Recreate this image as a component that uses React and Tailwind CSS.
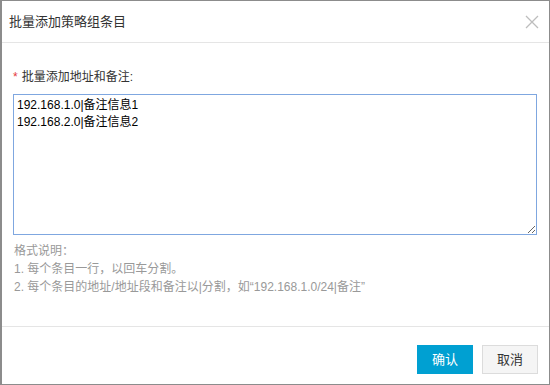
import React from "react";

export default function App() {
  const font = { fontFamily: '"Liberation Sans", "Noto Sans CJK SC", sans-serif' };
  return (
    <div
      className="w-[550px] h-[385px] bg-white border-l-2 border-t border-r border-b border-[#8c8c8c] flex flex-col overflow-hidden"
      style={font}
    >
      <div className="h-[42px] shrink-0 flex items-center justify-between pl-[7px] pr-[10px] border-b border-[#e5e5e5]">
        <span className="text-[13px] text-[#333]">批量添加策略组条目</span>
        <svg width="14" height="14" viewBox="0 0 14 14" className="mt-[1px]">
          <path d="M1 1L13 13M13 1L1 13" stroke="#bdbdbd" strokeWidth="1.3" />
        </svg>
      </div>
      <div className="flex-1 pl-[11px] pr-[11px] pt-[26px]">
        <div className="text-[12px] text-[#333] leading-[16px] flex items-center gap-[4px]">
          <span className="text-[#e4393c]">*</span>
          <span>批量添加地址和备注:</span>
        </div>
        <textarea
          className="mt-[9px] block w-[524px] h-[141px] border border-[#7fa7e0] outline-none px-[3px] py-[2px] text-[12px] leading-[17px] text-black resize"
          style={font}
          defaultValue={"192.168.1.0|备注信息1\n192.168.2.0|备注信息2"}
        />
        <div className="mt-[7px] text-[12px] leading-[18px] text-[#999] pl-[1px]">
          <div>格式说明：</div>
          <div>1. 每个条目一行，以回车分割。</div>
          <div>2. 每个条目的地址/地址段和备注以|分割，如“192.168.1.0/24|备注”</div>
        </div>
      </div>
      <div className="h-[58px] shrink-0 border-t border-[#e5e5e5] flex items-start justify-end gap-[9px] pr-[11px] pt-[18px]">
        <button className="w-[56px] h-[29px] bg-[#00a0d2] text-white text-[13px]">确认</button>
        <button className="w-[56px] h-[29px] bg-[#f5f5f5] border border-[#dcdcdc] text-[#333] text-[13px]">取消</button>
      </div>
    </div>
  );
}
